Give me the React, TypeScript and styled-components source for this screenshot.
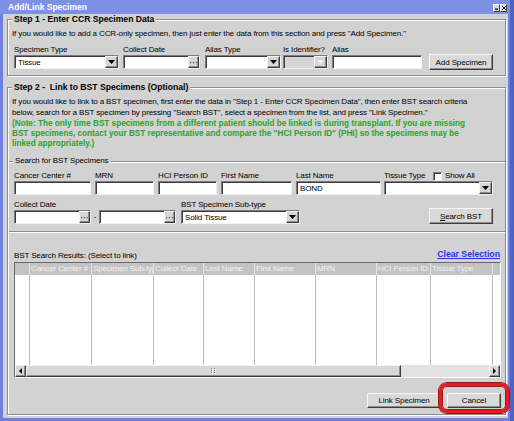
import React from "react";
import styled, { createGlobalStyle, css } from "styled-components";

const FONT = `"Liberation Sans", Arial, Helvetica, sans-serif`;
const GRAY = "#d2d2d2";
const COLS = "15px 62px 62px 50px 51px 61px 61px 54px 62px 7px";

const Global = createGlobalStyle`
  html, body { margin: 0; padding: 0; }
  body {
    font-family: ${FONT};
    font-size: 8px;
    letter-spacing: -0.12px;
    color: #000;
    background: #5a6dcc;
    overflow: hidden;
  }
  * { box-sizing: border-box; }
`;

const Screen = styled.div`
  width: 514px;
  height: 421px;
  display: flex;
  background: linear-gradient(90deg, #c9c9d6 0 1px, #4f63c4 1px);
  overflow: hidden;
`;

const Window = styled.div`
  width: 510px;
  height: 421px;
  flex: none;
  display: flex;
  flex-direction: column;
  background: #6f7fe0;
`;

const TitleBar = styled.div`
  height: 14px;
  flex: none;
  display: flex;
  align-items: center;
  justify-content: space-between;
  padding: 0 3px 0 8px;
  background: #7c90e4;
`;

const Title = styled.span`
  color: #fff;
  font-weight: bold;
  font-size: 8.5px;
  letter-spacing: 0;
  line-height: 14px;
`;

const CaptionBtns = styled.div`
  display: flex;
  margin-top: 1px;
`;

const CaptionBtn = styled.span`
  width: 7px;
  height: 8px;
  background: #d8d8d8;
  border: 1px solid;
  border-color: #fff #404040 #404040 #fff;
  display: flex;
  align-items: center;
  justify-content: center;
`;

const Body = styled.div`
  flex: 1;
  margin: 0 2px 3px 3px;
  padding: 0 2px 0 4px;
  background: ${GRAY};
  display: flex;
  flex-direction: column;
`;

const Group = styled.fieldset<{ $mt?: number }>`
  margin: ${(p) => p.$mt ?? 0}px 0 0 0;
  padding: 5px 0 6px 4px;
  border: 1px solid #8c8c8c;
  box-shadow: 1px 1px 0 #fff, inset 1px 1px 0 #fff;
  min-width: 0;
`;

const Legend = styled.legend<{ $bold?: boolean; $ml?: number }>`
  margin-left: ${(p) => p.$ml ?? 0}px;
  padding: 0 2px;
  line-height: 10px;
  font-weight: ${(p) => (p.$bold ? "bold" : "normal")};
  font-size: ${(p) => (p.$bold ? "8.6px" : "8px")};
  letter-spacing: ${(p) => (p.$bold ? "0" : "-0.12px")};
  background: ${GRAY};
  white-space: pre;
`;

const Text = styled.div<{ $lh?: number; $mt?: number }>`
  line-height: ${(p) => p.$lh ?? 10}px;
  margin-top: ${(p) => p.$mt ?? 0}px;
  white-space: nowrap;
`;

const Note = styled.div`
  margin-top: 1px;
  line-height: 10px;
  white-space: nowrap;
  color: #2ba32b;
  font-weight: bold;
  font-size: 8.2px;
  letter-spacing: 0;
`;

const SubGroup = styled.fieldset`
  margin: 7px 0 0 -3px;
  padding: 5px 0 7px 5px;
  border: 0;
  border-top: 1px solid #8c8c8c;
  border-bottom: 1px solid #8c8c8c;
  box-shadow: 0 1px 0 #fff, inset 0 1px 0 #fff;
  min-width: 0;
`;

const Row = styled.div<{ $mt?: number; $pl?: number }>`
  display: flex;
  align-items: flex-end;
  margin-top: ${(p) => p.$mt ?? 0}px;
  padding-left: ${(p) => p.$pl ?? 0}px;
`;

const Field = styled.div<{ $w: number; $ml?: number }>`
  width: ${(p) => p.$w}px;
  margin-left: ${(p) => p.$ml ?? 0}px;
  flex: none;
  display: flex;
  flex-direction: column;
`;

const Label = styled.div`
  height: 10px;
  line-height: 10px;
  white-space: nowrap;
  display: flex;
  align-items: center;
`;

const LabelText = styled.span<{ $w?: number }>`
  width: ${(p) => (p.$w ? `${p.$w}px` : "auto")};
  flex: none;
`;

const sunken = css`
  border: 1px solid;
  border-color: #7c7c7c #f2f2f2 #f2f2f2 #7c7c7c;
  box-shadow: inset 1px 1px 0 #3c3c3c;
`;

const raised = css`
  border: 1px solid;
  border-color: #f6f6f6 #3c3c3c #3c3c3c #f6f6f6;
  box-shadow: inset -1px -1px 0 #8e8e8e;
`;

const Box = styled.div<{ $disabled?: boolean }>`
  height: 14px;
  ${sunken};
  background: ${(p) => (p.$disabled ? "#d6d6d6" : "#fff")};
  display: flex;
  align-items: center;
  padding-left: 3px;
  white-space: nowrap;
  overflow: hidden;
`;

const BoxValue = styled.span`
  flex: 1;
  overflow: hidden;
`;

const DropBtn = styled.span`
  width: 13px;
  height: 12px;
  flex: none;
  ${raised};
  background: #d6d6d6;
  display: flex;
  align-items: center;
  justify-content: center;
`;

const DotsBtn = styled.span`
  width: 11px;
  height: 12px;
  flex: none;
  ${raised};
  background: #d6d6d6;
  display: flex;
  align-items: flex-end;
  justify-content: center;
  padding-bottom: 3px;
`;

const Check = styled.span`
  width: 9px;
  height: 9px;
  flex: none;
  background: #fff;
  ${sunken};
  margin-right: 3px;
`;

const Dash = styled.span`
  width: 8px;
  flex: none;
  height: 14px;
  line-height: 14px;
  text-align: center;
`;

const Button = styled.button<{ $w: number; $ml?: number; $mr?: number; $h?: number; $mb?: number }>`
  width: ${(p) => p.$w}px;
  height: ${(p) => p.$h ?? 16}px;
  margin: 0 ${(p) => p.$mr ?? 0}px ${(p) => p.$mb ?? 0}px ${(p) => p.$ml ?? 0}px;
  flex: none;
  padding: 0;
  font-family: ${FONT};
  font-size: 8px;
  letter-spacing: -0.1px;
  color: #000;
  background: #d9d9d9;
  ${raised};
  cursor: default;
`;

const Spacer = styled.div`
  flex: 1;
`;

const ResultsBar = styled.div`
  display: flex;
  justify-content: space-between;
  align-items: flex-start;
  margin-top: 19px;
  padding: 0 5px 0 2px;
  height: 10px;
  line-height: 10px;
  white-space: nowrap;
`;

const LinkText = styled.a`
  color: #2437e0;
  font-weight: bold;
  font-size: 8.7px;
  letter-spacing: 0;
  text-decoration: underline;
  margin-top: -2px;
  cursor: pointer;
`;

const Table = styled.div`
  margin: 1px 4px 0 2px;
  height: 116px;
  border: 1px solid;
  border-color: #6a6a6a #fff #fff #6a6a6a;
  background: #fff;
  display: flex;
  flex-direction: column;
`;

const HeadRow = styled.div`
  display: grid;
  grid-template-columns: ${COLS};
  height: 12px;
  flex: none;
  background: #c3c3c3;
`;

const HeadCell = styled.div<{ $last?: boolean }>`
  border-right: ${(p) => (p.$last ? "0" : "1px solid #e8e8e8")};
  color: #f3f3f3;
  padding-left: 1px;
  line-height: 12px;
  overflow: hidden;
  white-space: nowrap;
`;

const BodyCols = styled.div`
  display: grid;
  grid-template-columns: ${COLS};
  flex: 1;
`;

const BodyCell = styled.div<{ $last?: boolean }>`
  border-right: ${(p) => (p.$last ? "0" : "1px solid #bdbdbd")};
`;

const HScroll = styled.div`
  display: grid;
  grid-template-columns: 11px 375px 88px 11px;
  height: 12px;
  flex: none;
  background: #e2e2e2;
`;

const ScrollPart = styled.div<{ $track?: boolean }>`
  ${(p) => (p.$track ? "" : raised)};
  background: ${(p) => (p.$track ? "#e2e2e2" : "#d8d8d8")};
  display: flex;
  align-items: center;
  justify-content: center;
`;

const Footer = styled.div`
  display: flex;
  justify-content: flex-end;
  gap: 6px;
  margin-top: 15px;
  padding-right: 4px;
`;

const CancelWrap = styled.div`
  position: relative;
  display: flex;
`;

const Highlight = styled.span`
  position: absolute;
  left: -8px;
  right: -8px;
  top: -10px;
  bottom: -5px;
  border: 3px solid #e31b22;
  border-radius: 8px;
  box-shadow: 0 0 0 1px #9c1414, inset 0 0 0 1px #a41616;
  pointer-events: none;
`;

const Tri = ({ dir = "down", color = "#000" }: { dir?: "down" | "left" | "right"; color?: string }) => {
  if (dir === "down")
    return (
      <svg width="7" height="4" viewBox="0 0 7 4">
        <polygon points="0,0 7,0 3.5,4" fill={color} />
      </svg>
    );
  if (dir === "left")
    return (
      <svg width="3" height="6" viewBox="0 0 3 6">
        <polygon points="3,0 3,6 0,3" fill={color} />
      </svg>
    );
  return (
    <svg width="3" height="6" viewBox="0 0 3 6">
      <polygon points="0,0 0,6 3,3" fill={color} />
    </svg>
  );
};

const Dots = () => (
  <svg width="7" height="2" viewBox="0 0 7 2">
    <rect x="0" y="0" width="1.2" height="1.2" fill="#555" />
    <rect x="2.8" y="0" width="1.2" height="1.2" fill="#555" />
    <rect x="5.6" y="0" width="1.2" height="1.2" fill="#555" />
  </svg>
);

const Grip = () => (
  <svg width="6" height="6" viewBox="0 0 6 6">
    {[0, 2, 4].map((y) => (
      <React.Fragment key={y}>
        <rect x="0" y={y} width="1" height="1" fill="#777" />
        <rect x="3" y={y} width="1" height="1" fill="#777" />
        <rect x="1" y={y + 1} width="1" height="1" fill="#fff" />
        <rect x="4" y={y + 1} width="1" height="1" fill="#fff" />
      </React.Fragment>
    ))}
  </svg>
);

const Select = ({ value = "", disabled = false }: { value?: string; disabled?: boolean }) => (
  <Box $disabled={disabled}>
    <BoxValue>{value}</BoxValue>
    <DropBtn>
      <Tri color={disabled ? "#f4f4f4" : "#000"} />
    </DropBtn>
  </Box>
);

const DateBox = () => (
  <Box>
    <BoxValue />
    <DotsBtn>
      <Dots />
    </DotsBtn>
  </Box>
);

const TextInput = ({ value = "" }: { value?: string }) => (
  <Box>
    <BoxValue>{value}</BoxValue>
  </Box>
);

const headers = [
  "",
  "Cancer Center #",
  "Specimen Sub-type",
  "Collect Date",
  "Last Name",
  "First Name",
  "MRN",
  "HCI Person ID",
  "Tissue Type",
  "",
];

export default function App() {
  return (
    <>
      <Global />
      <Screen>
        <Window>
          <TitleBar>
            <Title>Add/Link Specimen</Title>
            <CaptionBtns>
              <CaptionBtn>
                <svg width="3" height="5" viewBox="0 0 3 5">
                  <rect x="0" y="3.5" width="3" height="1.2" fill="#000" />
                </svg>
              </CaptionBtn>
              <CaptionBtn>
                <svg width="4" height="4" viewBox="0 0 4 4">
                  <path d="M0 0L4 4M4 0L0 4" stroke="#000" strokeWidth="1" />
                </svg>
              </CaptionBtn>
            </CaptionBtns>
          </TitleBar>
          <Body>
            <Group>
              <Legend $bold>Step 1 - Enter CCR Specimen Data</Legend>
              <Text>
                If you would like to add a CCR-only specimen, then just enter the data from this section and press "Add
                Specimen."
              </Text>
              <Row $mt={6} $pl={2}>
                <Field $w={105}>
                  <Label>Specimen Type</Label>
                  <Select value="Tissue" />
                </Field>
                <Field $w={77} $ml={4}>
                  <Label>Collect Date</Label>
                  <DateBox />
                </Field>
                <Field $w={76} $ml={5}>
                  <Label>Alias Type</Label>
                  <Select />
                </Field>
                <Field $w={45} $ml={2}>
                  <Label>Is Identifier?</Label>
                  <Select disabled />
                </Field>
                <Field $w={90} $ml={4}>
                  <Label>Alias</Label>
                  <TextInput />
                </Field>
                <Button $w={64} $ml={7} $mb={-1}>
                  Add Specimen
                </Button>
              </Row>
            </Group>

            <Group $mt={6}>
              <Legend $bold>{"Step 2 -  Link to BST Specimens (Optional)"}</Legend>
              <Text $lh={10.5}>
                If you would like to link to a BST specimen, first enter the data in "Step 1 - Enter CCR Specimen Data",
                then enter BST search criteria
                <br />
                below, search for a BST specimen by pressing "Search BST", select a specimen from the list, and press
                "Link Specimen."
              </Text>
              <Note>
                (Note: The only time BST specimens from a different patient should be linked is during transplant. If
                you are missing
                <br />
                BST specimens, contact your BST representative and compare the "HCI Person ID" (PHI) so the specimens
                may be
                <br />
                linked appropriately.)
              </Note>

              <SubGroup>
                <Legend $ml={-1}>Search for BST Specimens</Legend>
                <Row>
                  <Field $w={77}>
                    <Label>Cancer Center #</Label>
                    <TextInput />
                  </Field>
                  <Field $w={59} $ml={4}>
                    <Label>MRN</Label>
                    <TextInput />
                  </Field>
                  <Field $w={59} $ml={4}>
                    <Label>HCI Person ID</Label>
                    <TextInput />
                  </Field>
                  <Field $w={71} $ml={4}>
                    <Label>First Name</Label>
                    <TextInput />
                  </Field>
                  <Field $w={85} $ml={4}>
                    <Label>Last Name</Label>
                    <TextInput value="BOND" />
                  </Field>
                  <Field $w={109} $ml={3}>
                    <Label>
                      <LabelText $w={49}>Tissue Type</LabelText>
                      <Check />
                      <LabelText>Show All</LabelText>
                    </Label>
                    <Select />
                  </Field>
                </Row>
                <Row $mt={5}>
                  <Field $w={77}>
                    <Label>Collect Date</Label>
                    <DateBox />
                  </Field>
                  <Dash>-</Dash>
                  <Field $w={77}>
                    <Label />
                    <DateBox />
                  </Field>
                  <Field $w={119} $ml={5}>
                    <Label>BST Specimen Sub-type</Label>
                    <Select value="Solid Tissue" />
                  </Field>
                  <Spacer />
                  <Button $w={64} $mr={12}>
                    <u>S</u>earch BST
                  </Button>
                </Row>
              </SubGroup>

              <ResultsBar>
                <span>BST Search Results: (Select to link)</span>
                <LinkText>Clear Selection</LinkText>
              </ResultsBar>

              <Table>
                <HeadRow>
                  {headers.map((h, i) => (
                    <HeadCell key={i} $last={i === headers.length - 1}>
                      {h}
                    </HeadCell>
                  ))}
                </HeadRow>
                <BodyCols>
                  {headers.map((_, i) => (
                    <BodyCell key={i} $last={i === headers.length - 1} />
                  ))}
                </BodyCols>
                <HScroll>
                  <ScrollPart>
                    <Tri dir="left" />
                  </ScrollPart>
                  <ScrollPart>
                    <Grip />
                  </ScrollPart>
                  <ScrollPart $track />
                  <ScrollPart>
                    <Tri dir="right" />
                  </ScrollPart>
                </HScroll>
              </Table>

              <Footer>
                <Button $w={74} $h={15}>
                  Link Specimen
                </Button>
                <CancelWrap>
                  <Button $w={54} $h={15}>
                    Cancel
                  </Button>
                  <Highlight />
                </CancelWrap>
              </Footer>
            </Group>
          </Body>
        </Window>
      </Screen>
    </>
  );
}
